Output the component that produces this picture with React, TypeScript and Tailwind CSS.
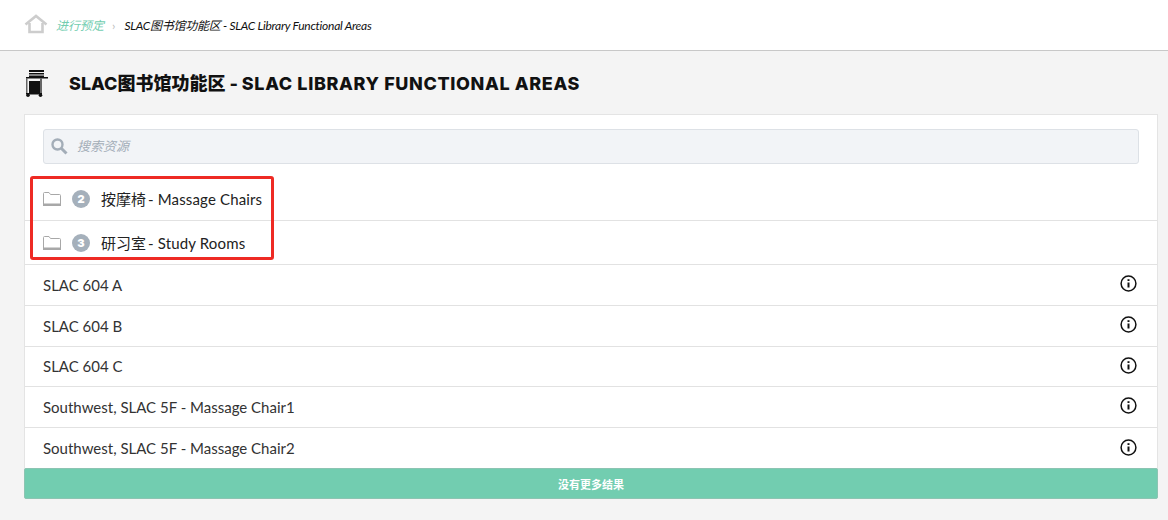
import React from 'react';

const CJK = "font-['Lato','Noto_Sans_CJK_SC',sans-serif]";

const folders = [
  { count: 2, name: '按摩椅', en: '- Massage Chairs', h: 'h-[44px]' },
  { count: 3, name: '研习室', en: '- Study Rooms', h: 'h-[44px]' },
];

const resources = [
  { label: 'SLAC 604 A', h: 'h-[41px]' },
  { label: 'SLAC 604 B', h: 'h-[41px]' },
  { label: 'SLAC 604 C', h: 'h-[40px]' },
  { label: 'Southwest, SLAC 5F - Massage Chair1', h: 'h-[41px]' },
  { label: 'Southwest, SLAC 5F - Massage Chair2', h: 'h-[41px]' },
];

const HomeIcon = () => (
  <svg width="24" height="20" viewBox="0 0 24 20" fill="none" stroke="#cdcdcd" strokeWidth="2.6" className="mt-[-4px]">
    <path d="M1.500 10.500 12 2l10.500 8.500" />
    <path d="M5.500 9v9h13V9" />
  </svg>
);

const CartIcon = () => (
  <svg width="23" height="27" viewBox="0 0 23 27" fill="#111" className="ml-[1px]">
    <rect x="3" y="0" width="15" height="2" />
    <rect x="3" y="3" width="15" height="1.500" />
    <rect x="3" y="5.500" width="15" height="1.500" />
    <rect x="0" y="7" width="22" height="1.500" />
    <path d="M0 8h1.500v16H0zM14 8h2v16h-2z" fill="#666" />
    <rect x="3" y="11" width="11" height="12" />
    <rect x="0" y="23" width="16" height="1.500" />
    <circle cx="2" cy="25.200" r="1.800" />
    <circle cx="14.500" cy="25.200" r="1.800" />
  </svg>
);

const FolderIcon = () => (
  <svg width="18" height="14" viewBox="0 0 18 14" className="shrink-0">
    <path d="M.5 13V1.500q0-1 1-1h4.500l1.500 2h9q1 0 1 1V13z" fill="#fff" stroke="#a8a8a8" />
    <rect x="0" y="11.500" width="18" height="2.500" fill="#a8a8a8" />
  </svg>
);

const SearchIcon = () => (
  <svg width="17" height="17" viewBox="0 0 17 17" fill="none" stroke="#a3adb8" className="shrink-0">
    <circle cx="6.500" cy="6.500" r="5" strokeWidth="2.400" />
    <path d="M10.500 10.500 15.500 15.500" strokeWidth="3" />
  </svg>
);

const InfoIcon = () => (
  <svg width="17" height="17" viewBox="0 0 17 17" fill="none" stroke="#111" className="mb-[3px] shrink-0">
    <circle cx="8.500" cy="8.500" r="7.400" strokeWidth="1.500" />
    <path d="M8.500 7.500v5" strokeWidth="2" />
    <path d="M8.500 4.200v1.800" strokeWidth="2" />
  </svg>
);

export default function App() {
  return (
    <div className={`h-[520px] w-[1168px] overflow-hidden bg-[#f4f4f4] ${CJK}`}>
      <div className="flex h-[51px] items-center border-b border-[#c8c8c8] bg-white pl-[24px] pt-[2px]">
        <HomeIcon />
        <span className="ml-[8px] text-[12px] italic text-[#72cdb0]">进行预定</span>
        <span className="ml-[8px] mr-[9px] text-[12px] text-[#bbb]">›</span>
        <span className="text-[12px] italic tracking-[-0.26px] text-[#111]">SLAC图书馆功能区 - SLAC Library Functional Areas</span>
      </div>

      <div className="flex h-[63px] items-center pl-[25px] pt-[1px]">
        <CartIcon />
        <h1 className="ml-[20px] font-['Inter','Noto_Sans_CJK_SC',sans-serif] text-[18px] font-extrabold text-[#111]">
          SLAC图书馆功能区 - <span className="tracking-[0.62px]">SLAC LIBRARY FUNCTIONAL AREAS</span>
        </h1>
      </div>

      <div className="ml-[24px] mr-[10px] h-[355px] border border-[#e4e4e4] bg-white">
        <div className="pb-[13px] pl-[18px] pr-[18px] pt-[14px]">
          <div className="flex h-[35px] items-center rounded-[3px] border border-[#dde1e6] bg-[#f2f4f7] pl-[7px]">
            <SearchIcon />
            <span className="ml-[9px] text-[13px] italic text-[#a3adb8]">搜索资源</span>
          </div>
        </div>

        <div className="relative">
          <div className="pointer-events-none absolute left-[5px] top-[-1px] h-[84px] w-[244px] rounded-[3px] border-[3px] border-[#ee2a24]" />
          {folders.map(f => (
            <div key={f.name} className={`flex ${f.h} items-center border-b border-[#e2e2e2] pl-[18px] pt-[1px]`}>
              <FolderIcon />
              <span className="ml-[11px] flex h-[18px] w-[18px] items-center justify-center rounded-full bg-[#a5b0bb] font-['Inter',sans-serif] text-[11px] font-black text-white">
                {f.count}
              </span>
              <span className="ml-[11px] text-[15px] text-[#222]">
                {f.name}
                <span className="ml-[2px] tracking-[0.15px]">{f.en}</span>
              </span>
            </div>
          ))}
        </div>

        {resources.map(r => (
          <div key={r.label} className={`flex ${r.h} items-center justify-between border-b border-[#e2e2e2] pl-[18px] pr-[20px] last:border-b-0`}>
            <span className="text-[15px] text-[#333]">{r.label}</span>
            <InfoIcon />
          </div>
        ))}
      </div>

      <div className="ml-[24px] mr-[10px] mt-[-1px] flex h-[31px] items-center justify-center rounded-[2px] border border-[#8cc4b2] bg-[#72cdb0] pt-[3px] text-[11px] font-bold text-white">
        没有更多结果
      </div>
    </div>
  );
}
